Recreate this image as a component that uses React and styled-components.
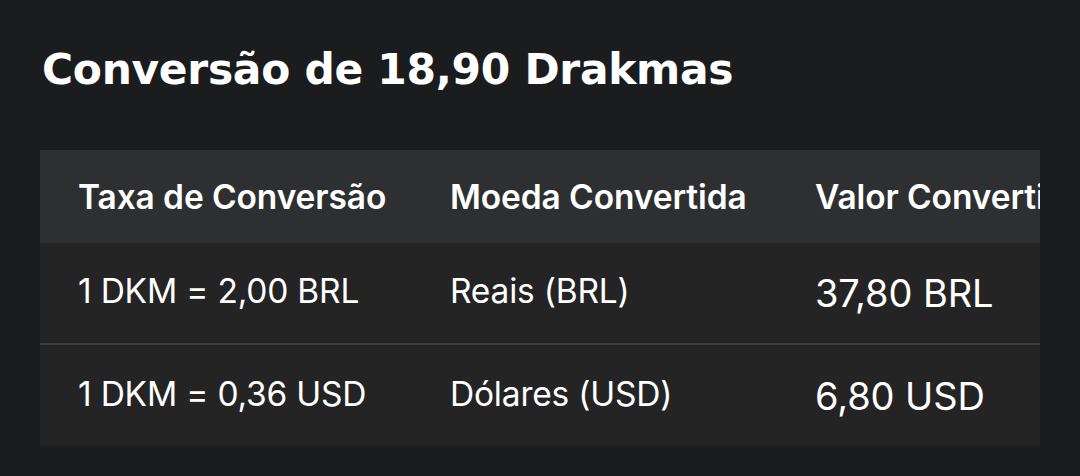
import React from 'react';
import styled, { createGlobalStyle } from 'styled-components';

const GlobalStyle = createGlobalStyle`
  html, body {
    margin: 0;
    padding: 0;
    background: #1b1c1e;
  }
`;

const rows = [
  { rate: '1 DKM = 2,00 BRL', currency: 'Reais (BRL)', value: '37,80 BRL' },
  { rate: '1 DKM = 0,36 USD', currency: 'Dólares (USD)', value: '6,80 USD' },
];

function App() {
  return (
    <Page>
      <GlobalStyle />
      <Title>Conversão de 18,90 Drakmas</Title>
      <TableWrapper>
        <Table>
          <colgroup>
            <col style={{ width: 372 }} />
            <col style={{ width: 365 }} />
            <col style={{ width: 360 }} />
          </colgroup>
          <thead>
            <tr>
              <HeadCell>Taxa de Conversão</HeadCell>
              <HeadCell>Moeda Convertida</HeadCell>
              <HeadCell>Valor Convertido</HeadCell>
            </tr>
          </thead>
          <tbody>
            {rows.map((row, i) => (
              <Row key={row.rate} last={i === rows.length - 1}>
                <Cell>{row.rate}</Cell>
                <Cell>{row.currency}</Cell>
                <Cell big>{row.value}</Cell>
              </Row>
            ))}
          </tbody>
        </Table>
      </TableWrapper>
    </Page>
  );
}

export default App;

const Page = styled.div`
  width: 1080px;
  height: 476px;
  padding: 37px 40px 0;
  box-sizing: border-box;
  background: #1b1c1e;
  overflow: hidden;
`;

const Title = styled.h1`
  margin: 0 0 0 2px;
  height: 73px;
  font-family: 'DejaVu Sans', Inter, sans-serif;
  font-weight: 700;
  font-size: 42.4px;
  line-height: 66px;
  letter-spacing: -0.3px;
  color: #ffffff;
`;

const TableWrapper = styled.div`
  margin-top: 40px;
  width: 1000px;
  overflow: hidden;
  background: #242424;
`;

const Table = styled.table`
  width: 1097px;
  table-layout: fixed;
  border-collapse: collapse;
  font-family: Inter, 'Noto Sans', sans-serif;
  color: #ffffff;
`;

const HeadCell = styled.th`
  height: 93px;
  padding: 0 0 0 38px;
  background: #2e2f31;
  text-align: left;
  white-space: nowrap;
  font-size: 33.5px;
  font-weight: 600;
  letter-spacing: -0.1px;
`;

const Row = styled.tr`
  height: ${({ last }) => (last ? '102px' : '101px')};
  border-bottom: ${({ last }) => (last ? 'none' : '2px solid #3a3b3d')};
`;

const Cell = styled.td`
  padding: 0 0 ${({ big }) => (big ? '0' : '4px')} 38px;
  white-space: nowrap;
  font-size: ${({ big }) => (big ? '38px' : '33.5px')};
  font-weight: 400;
  letter-spacing: ${({ big }) => (big ? '-0.1px' : '-0.2px')};
`;
